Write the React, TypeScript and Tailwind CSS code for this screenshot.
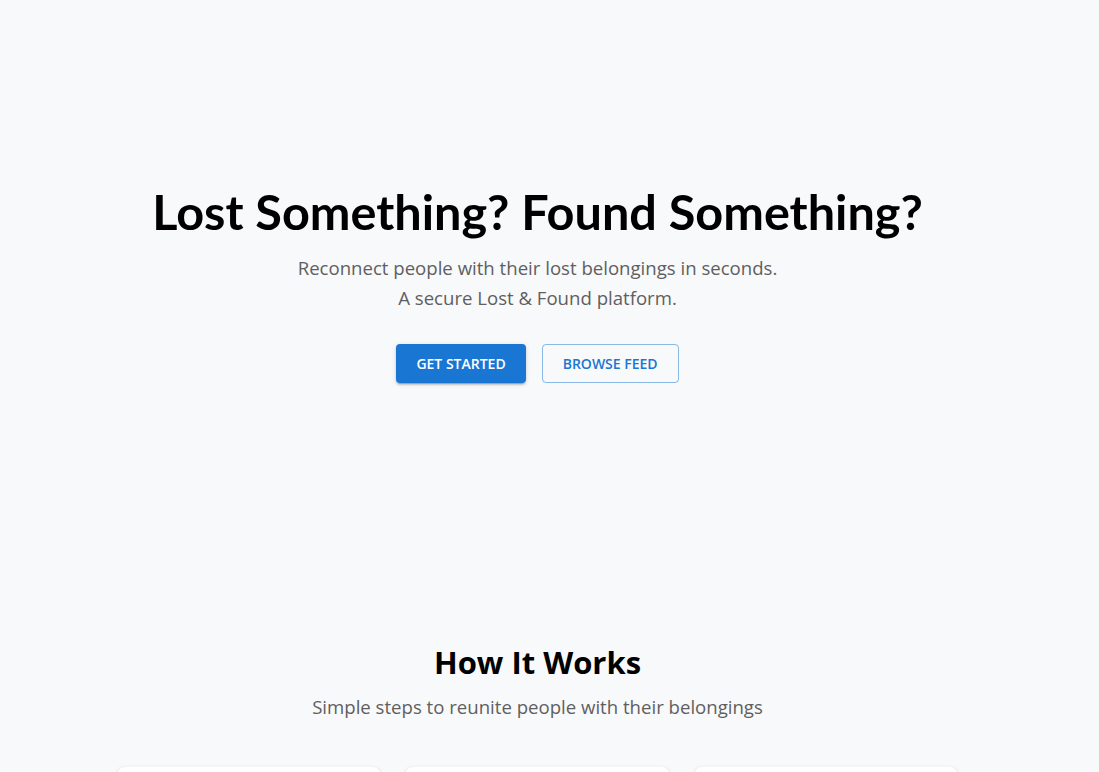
import React from "react";

function StepCard() {
  return (
    <div className="h-[200px] rounded-lg bg-white shadow-[0_1px_3px_rgba(0,0,0,0.12)] border border-gray-100" />
  );
}

export default function App() {
  return (
    <div className="min-h-screen bg-[#f8f9fb] font-['Open_Sans',sans-serif]">
      <div className="w-[1075px]">
        {/* Hero */}
        <section className="flex flex-col items-center px-4 pt-[182px] pb-[260px] text-center">
          <h1 className="font-['Lato',sans-serif] text-[48.6px] font-bold leading-[1.2] text-black">
            Lost Something? Found Something?
          </h1>
          <p className="mt-[13px] text-[18.6px] font-medium leading-[30px] text-[#5f5f5f]">
            Reconnect people with their lost belongings in seconds.
            <br />
            A secure Lost &amp; Found platform.
          </p>
          <div className="mt-[31px] flex gap-4">
            <button className="h-[39px] rounded px-5 bg-[#1976d2] text-[14px] font-semibold uppercase text-white shadow-[0_3px_1px_-2px_rgba(0,0,0,0.2),0_2px_2px_0_rgba(0,0,0,0.14),0_1px_5px_0_rgba(0,0,0,0.12)]">
              Get Started
            </button>
            <button className="h-[39px] rounded px-5 border border-[#1976d2]/50 text-[14px] font-semibold uppercase text-[#1976d2]">
              Browse Feed
            </button>
          </div>
        </section>

        {/* How it works */}
        <section className="flex flex-col items-center px-4 text-center">
          <h2 className="text-[31px] font-bold leading-tight text-black">How It Works</h2>
          <p className="mt-[11px] text-[18.6px] font-medium text-[#5f5f5f]">Simple steps to reunite people with their belongings</p>
          <div className="mt-[45px] grid w-[842px] grid-cols-3 gap-6">
            <StepCard />
            <StepCard />
            <StepCard />
          </div>
        </section>
      </div>
    </div>
  );
}
